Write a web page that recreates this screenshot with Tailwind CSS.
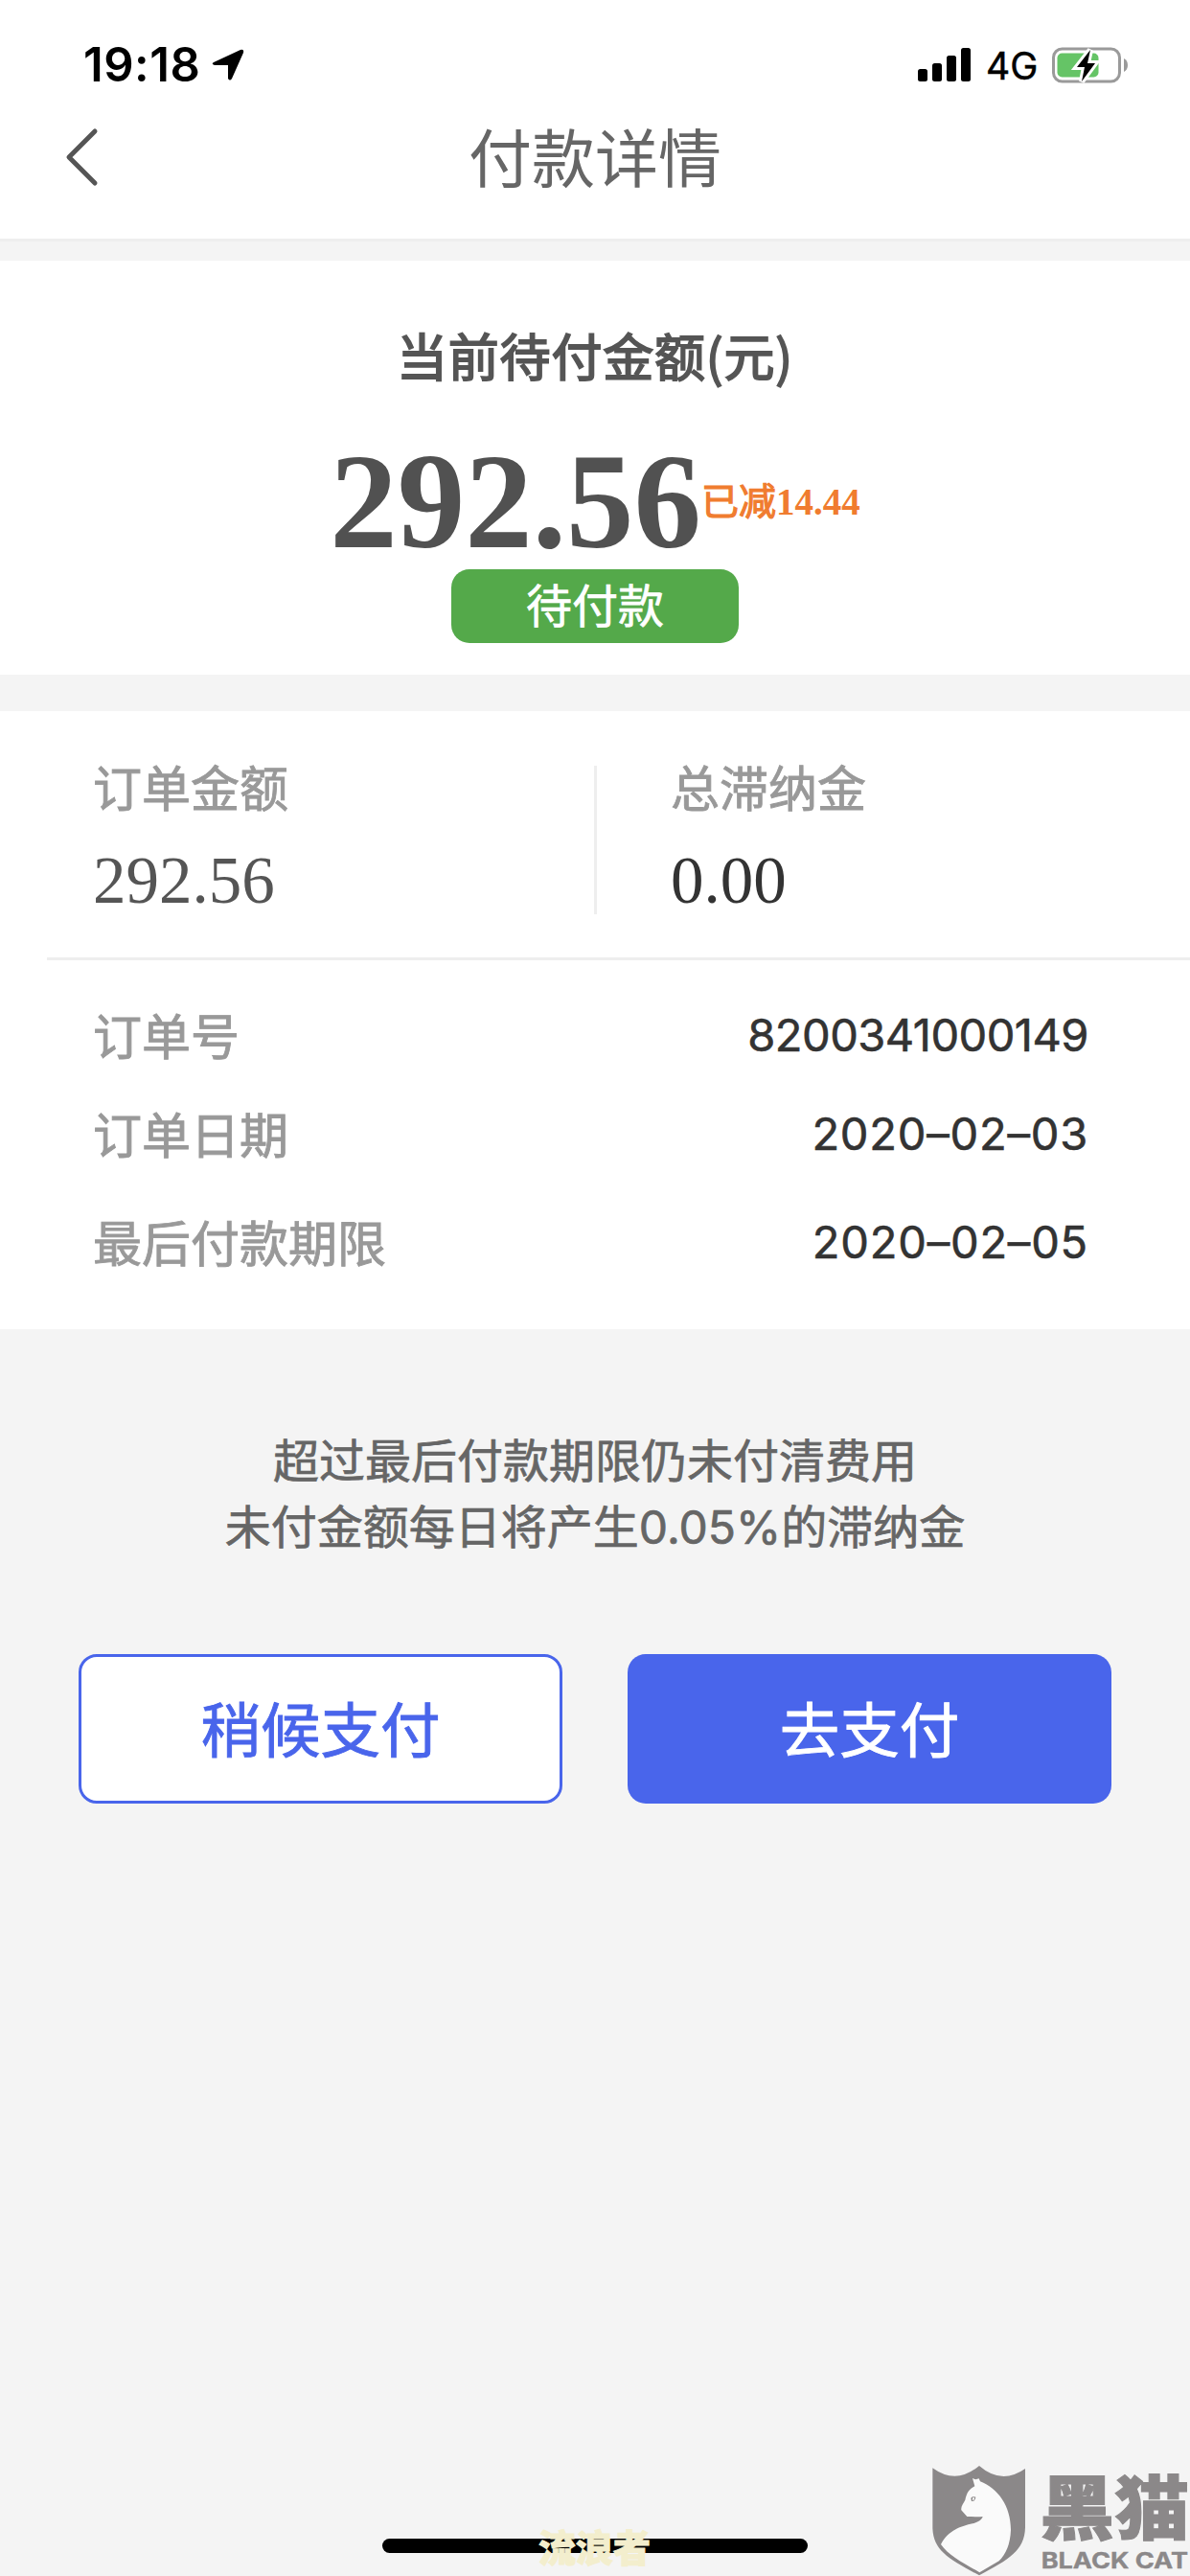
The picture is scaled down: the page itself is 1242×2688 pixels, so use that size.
<!DOCTYPE html>
<html lang="zh-CN">
<head>
  <meta charset="UTF-8" />
  <meta name="viewport" content="width=device-width, initial-scale=1.0" />
  <title>付款详情</title>

  <!-- Tailwind CSS -->
  <script src="https://cdn.jsdelivr.net/npm/@tailwindcss/browser@4"></script>
</head>

<body class="relative w-[1242px] h-[2688px] overflow-hidden bg-[#f4f4f4] font-['Noto_Sans_CJK_SC',sans-serif]">

  <!-- Status bar -->
  <div class="flex h-[110px] items-center bg-white pl-[87px] pr-[64px] pt-[26px] font-['Inter',sans-serif] text-black">
    <span class="w-[134px] whitespace-nowrap text-[49px] font-semibold leading-[60px] tracking-[0.500px]">19:18</span>
    <svg class="h-[34px] w-[34px]" viewBox="0 0 34 34">
      <path d="M2 14 L30 1 Q34 0 33 4 L21 31 Q19 34 17 31 V17 H3 Q-1 16 2 14 Z" fill="#000" />
    </svg>
    <svg class="ml-auto h-[36px] w-[56px]" viewBox="0 0 56 36">
      <rect x="0" y="22" width="10" height="13" rx="2.5" />
      <rect x="15" y="16" width="10" height="19" rx="2.5" />
      <rect x="30" y="8" width="10" height="27" rx="2.5" />
      <rect x="45" y="0" width="10" height="35" rx="2.5" />
    </svg>
    <span class="ml-[15px] w-[68px] whitespace-nowrap pt-[2px] text-[39px] leading-[44px] [-webkit-text-stroke:0.5px_#000]">4G</span>
    <svg class="h-[40px] w-[81px]" viewBox="0 0 81 40">
      <rect x="2.5" y="3" width="69" height="34" rx="9" fill="none" stroke="#9a9a9a" stroke-width="3" />
      <path d="M76 13 Q80 15 80 20 Q80 25 76 27 Z" fill="#9a9a9a" />
      <rect x="6.500" y="7.500" width="43" height="25" rx="5" fill="#65c466" />
      <path d="M41 4 L27 22 H35 L32 37 L46 18 H38 Z" fill="#fff" stroke="#fff" stroke-width="6" />
      <path d="M41 4 L27 22 H35 L32 37 L46 18 H38 Z" fill="#000" />
    </svg>
  </div>

  <!-- Title bar -->
  <header class="relative flex h-[142px] justify-center border-b-3 border-[#eeeeee] bg-white">
    <svg class="absolute left-[66px] top-[22px] h-[64px] w-[40px]" viewBox="0 0 40 64" fill="none" stroke="#555" stroke-width="5" stroke-linecap="round" stroke-linejoin="round">
      <path d="M33 5 L6 32 L33 59" />
    </svg>
    <h1 class="mt-[11px] text-[66px] leading-[80px] text-[#666]">付款详情</h1>
  </header>

  <!-- Amount due -->
  <section class="mt-[20px] flex h-[432px] flex-col items-center bg-white pt-[68px]">
    <h2 class="h-[60px] text-[53px] leading-[60px] tracking-[0.800px] text-[#555] [-webkit-text-stroke:1.8px_#555]">当前待付金额(元)</h2>
    <div class="mt-[53px] flex h-[141px] items-center font-['Liberation_Serif','Noto_Sans_CJK_SC',serif] font-bold">
      <span class="text-[141px] leading-[141px] text-[#515151]">292.56</span>
      <span class="text-[39px] leading-[50px] text-[#f07c2f]"><span class="font-normal [-webkit-text-stroke:1.2px_#f07c2f]">已减</span>14.44</span>
    </div>
    <span class="flex h-[77px] w-[300px] justify-center rounded-[19px] bg-[#54a94a] text-[48px] leading-[70px] text-white [-webkit-text-stroke:0.7px_#fff]">待付款</span>
  </section>

  <!-- Order details -->
  <section class="mt-[38px] h-[645px] bg-white">
    <div class="ml-[49px] flex h-[260px] border-b-3 border-[#eeeeee] pt-[57px]">
      <div class="h-[155px] w-[571px] pl-[48px]">
        <p class="text-[51px] leading-[42px] text-[#999] [-webkit-text-stroke:0.9px_#999]">订单金额</p>
        <p class="mt-[43px] font-['Liberation_Serif',serif] text-[69px] leading-[70px] text-[#555]">292.56</p>
      </div>
      <div class="h-[155px] flex-1 border-l-3 border-[#eeeeee] pl-[77px]">
        <p class="text-[51px] leading-[42px] text-[#999] [-webkit-text-stroke:0.9px_#999]">总滞纳金</p>
        <p class="mt-[43px] font-['Liberation_Serif',serif] text-[69px] leading-[70px] text-[#333]">0.00</p>
      </div>
    </div>

    <dl class="pl-[97px] pr-[106px] pt-[47px] text-[51px] leading-[60px]">
      <div class="flex h-[103px] justify-between">
        <dt class="text-[#999] [-webkit-text-stroke:0.9px_#999]">订单号</dt>
        <dd class="pt-px font-['Inter',sans-serif] text-[47px] tracking-[-0.500px] text-[#333] [-webkit-text-stroke:0.6px_#333]">8200341000149</dd>
      </div>
      <div class="flex h-[113px] justify-between">
        <dt class="text-[#999] [-webkit-text-stroke:0.9px_#999]">订单日期</dt>
        <dd class="pt-px font-['Inter',sans-serif] text-[47px] tracking-[0.800px] text-[#333] [-webkit-text-stroke:0.6px_#333]">2020–02–03</dd>
      </div>
      <div class="flex justify-between">
        <dt class="text-[#999] [-webkit-text-stroke:0.9px_#999]">最后付款期限</dt>
        <dd class="pt-px font-['Inter',sans-serif] text-[47px] tracking-[0.800px] text-[#333] [-webkit-text-stroke:0.6px_#333]">2020–02–05</dd>
      </div>
    </dl>
  </section>

  <!-- Late fee notice -->
  <div class="mt-[103px] h-[138px] text-center font-['Inter','Noto_Sans_CJK_SC',sans-serif] text-[48px] leading-[69px] text-[#666] [-webkit-text-stroke:0.7px_#666]">
    <p class="h-[69px]">超过最后付款期限仍未付清费用</p>
    <p class="h-[69px]">未付金额每日将产生0.05%的滞纳金</p>
  </div>

  <!-- Actions -->
  <div class="mt-[98px] flex justify-between px-[82px] text-[62.500px]">
    <button type="button" class="h-[156px] w-[505px] rounded-[19px] border-3 border-[#4965eb] bg-white leading-[146px] pb-[4px] text-[#4965eb] [-webkit-text-stroke:0.9px_#4965eb]">稍候支付</button>
    <button type="button" class="h-[156px] w-[505px] rounded-[19px] bg-[#4965eb] leading-[152px] pb-[4px] text-white [-webkit-text-stroke:0.9px_#fff]">去支付</button>
  </div>

  <!-- Home indicator with user watermark -->
  <div class="absolute left-[399px] top-[2649px] h-[15px] w-[444px] rounded-full bg-black"></div>
  <span class="absolute left-[562px] top-[2636px] whitespace-nowrap text-[39px] font-black leading-[40px] text-[#f3eecd] [-webkit-text-stroke:1px_#f3eecd]">流浪者</span>

  <!-- Black Cat watermark -->
  <svg class="absolute left-[940px] top-[2540px] h-[148px] w-[302px]" viewBox="0 0 906 444">
    <path d="M100 106 Q174 160 246 99 Q316 160 390 108 V292 C388 365 340 392 246 442 C150 390 103 365 100 295 Z" fill="#8b8889" />
    <path d="M225 138 L235 142 L245 139 L249 148 C305 170 345 225 345 300 C343 345 330 375 308 397 L247 433 C195 402 150 380 126 345 C150 300 190 288 225 280 C242 276 254 268 257 258 C240 260 224 258 208 258 L190 238 C188 226 196 218 202 206 C207 184 214 172 232 163 Z" fill="#fafafa" />
    <path d="M220 200 Q226 192 235 197 Q234 211 222 210 Z" fill="#8b8889" />
    <path d="M225 200 L230 196 L231 204 L225 208 Z" fill="#fafafa" />
    <g fill="#8b8889" stroke="#8b8889">
      <text x="436" y="313" font-family="Noto Sans CJK SC" font-weight="900" font-size="218" stroke-width="3" textLength="468" lengthAdjust="spacingAndGlyphs">黑猫</text>
      <text x="440" y="421" font-family="Inter" font-weight="700" font-size="67" stroke-width="1" textLength="460" lengthAdjust="spacingAndGlyphs">BLACK CAT</text>
    </g>
  </svg>

</body>
</html>
